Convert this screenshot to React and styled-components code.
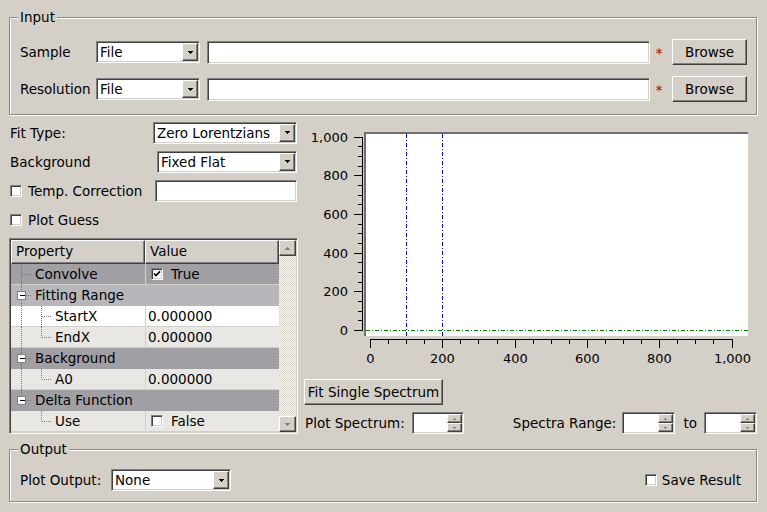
import React from "react"
import styled, { createGlobalStyle, css } from "styled-components"

const GlobalStyle = createGlobalStyle`
  html, body {
    margin: 0;
    padding: 0;
    background: #d4d0c8;
  }
  body {
    font-family: "DejaVu Sans", "Liberation Sans", sans-serif;
    font-size: 13.5px;
    color: #000;
  }
`

// classic 3d frames
const sunken = css`
  box-sizing: border-box;
  border: 1px solid;
  border-color: #808080 #ffffff #ffffff #808080;
  box-shadow: inset 1px 1px 0 #404040, inset -1px -1px 0 #d4d0c8;
`

const raised = css`
  box-sizing: border-box;
  border: 1px solid;
  border-color: #ffffff #404040 #404040 #ffffff;
  box-shadow: inset -1px -1px 0 #808080;
  background: #d4d0c8;
`

const Tri = ({ n = 3, up = false, color = "#000" }) => {
  const w = n * 2 - 1
  const rows = []
  for (let i = 0; i < n; i++) {
    const y = up ? n - 1 - i : i
    rows.push(<rect key={i} x={i} y={y} width={w - i * 2} height={1} fill={color} />)
  }
  return (
    <svg width={w} height={n} viewBox={`0 0 ${w} ${n}`} shapeRendering="crispEdges">
      {rows}
    </svg>
  )
}

const Window = styled.div`
  width: 767px;
  height: 512px;
  box-sizing: border-box;
  padding: 10px 10px 0 9px;
  display: flex;
  flex-direction: column;
`

const Group = styled.fieldset`
  margin: ${(p) => p.$mt || 0}px 0 0 0;
  padding: ${(p) => p.$pad};
  border: 1px solid #8c8980;
  box-shadow: inset 1px 1px 0 #ffffff, 1px 1px 0 #ffffff;
  min-width: 0;
`

const Legend = styled.legend`
  padding: 0 2px;
  margin-left: -2px;
  line-height: 15px;
  background: #d4d0c8;
`

const FileRow = styled.div`
  display: flex;
  align-items: center;
  height: 26px;
  & + & {
    margin-top: 11px;
  }
`

const RowLabel = styled.span`
  width: ${(p) => p.$w || 76}px;
  flex: none;
  white-space: nowrap;
`

const ComboFrame = styled.div`
  ${sunken};
  flex: none;
  width: ${(p) => p.$w}px;
  height: 22px;
  margin-left: ${(p) => p.$ml || 0}px;
  padding: 1px;
  background: #fff;
  display: flex;
  align-items: stretch;
`

const ComboText = styled.span`
  flex: 1;
  padding-left: 2px;
  line-height: 18px;
  white-space: nowrap;
  overflow: hidden;
`

const DropButton = styled.span`
  ${raised};
  width: 16px;
  display: flex;
  align-items: center;
  justify-content: center;
`

const ComboBox = ({ width, text, ml }) => (
  <ComboFrame $w={width} $ml={ml}>
    <ComboText>{text}</ComboText>
    <DropButton>
      <Tri n={3} />
    </DropButton>
  </ComboFrame>
)

const LineEdit = styled.input`
  ${sunken};
  display: block;
  height: ${(p) => p.$h || 23}px;
  width: ${(p) => (p.$w ? `${p.$w}px` : "auto")};
  flex: ${(p) => (p.$w ? "none" : "1")};
  min-width: 0;
  margin: 0 0 0 ${(p) => p.$ml || 0}px;
  padding: 0 3px;
  background: #fff;
  font: inherit;
  outline: none;
`

const Required = styled.span`
  width: 22px;
  flex: none;
  padding-right: 4px;
  box-sizing: border-box;
  text-align: center;
  color: #b40000;
  align-self: flex-start;
  margin-top: 6px;
`

const PushButton = styled.button`
  ${raised};
  flex: none;
  width: ${(p) => p.$w}px;
  height: 26px;
  padding: 0;
  font: inherit;
  color: #000;
`

const Middle = styled.div`
  display: flex;
  margin-top: 7px;
  height: 312px;
`

const LeftPane = styled.div`
  width: 289px;
  flex: none;
  display: flex;
  flex-direction: column;
`

const FormRow = styled.div`
  display: flex;
  align-items: center;
  justify-content: space-between;
  height: ${(p) => p.$h || 21}px;
  margin-top: ${(p) => p.$mt || 0}px;
  padding: 0 ${(p) => (p.$flush ? 0 : 1)}px;
`

const CheckGroup = styled.label`
  display: flex;
  align-items: center;
  gap: ${(p) => p.$gap || 6}px;
  white-space: nowrap;
`

const CheckFrame = styled.span`
  ${sunken};
  width: 12px;
  height: 12px;
  flex: none;
  background: #fff;
  display: flex;
  align-items: center;
  justify-content: center;
`

const CheckBox = ({ checked }) => (
  <CheckFrame>
    {checked && (
      <svg width="8" height="8" viewBox="0 0 8 8">
        <path d="M1 3.5l2 2 4-4.2" fill="none" stroke="#000" strokeWidth="1.7" />
      </svg>
    )}
  </CheckFrame>
)

const Tree = styled.div`
  ${sunken};
  margin-top: 9px;
  height: 196px;
  padding: 1px;
  display: flex;
  background: #fff;
`

const TreeBody = styled.div`
  flex: 1;
  display: flex;
  flex-direction: column;
  background: #fff;
  overflow: hidden;
`

const HeaderRow = styled.div`
  display: flex;
  height: 24px;
  flex: none;
`

const HeaderCell = styled.div`
  ${raised};
  width: ${(p) => (p.$w ? `${p.$w}px` : "auto")};
  flex: ${(p) => (p.$w ? "none" : "1")};
  padding-left: 4px;
  line-height: 21px;
`

const PropRow = styled.div`
  display: flex;
  height: 21px;
  flex: none;
  box-sizing: border-box;
  background: ${(p) => p.$bg};
  border-bottom: 1px solid ${(p) => (p.$group ? "transparent" : "#d4d0c8")};
`

const NameCell = styled.div`
  width: ${(p) => (p.$full ? "auto" : "134px")};
  flex: ${(p) => (p.$full ? "1" : "none")};
  display: flex;
  align-items: flex-start;
  white-space: nowrap;
`

const NameText = styled.span`
  padding-left: 2px;
  line-height: 20px;
`

const ValueCell = styled.div`
  flex: 1;
  border-left: 1px solid #d4d0c8;
  padding-left: 2px;
  display: flex;
  align-items: center;
  gap: 8px;
  line-height: 20px;
`

const ValueCheck = styled.span`
  margin-left: 3px;
  display: flex;
`

const DOT = "#777"

const Guide = ({ width, line, branch, box, axis }) => (
  <svg width={width} height="21" viewBox={`0 0 ${width} 21`} style={{ flex: "none" }}>
    {line !== "none" && (
      <line
        x1={axis}
        x2={axis}
        y1="0"
        y2={line === "half" ? 10.5 : 21}
        stroke={DOT}
        strokeDasharray="1 1"
      />
    )}
    {branch && (
      <line x1={axis + 0.5} x2={width - 2} y1="10.5" y2="10.5" stroke={DOT} strokeDasharray="1 1" />
    )}
    {box && (
      <g shapeRendering="crispEdges">
        <rect x={axis - 4} y="6.5" width="8" height="8" fill="#fff" stroke="#808080" />
        <line x1={axis - 2} x2={axis + 3} y1="10.5" y2="10.5" stroke="#000" />
      </g>
    )}
  </svg>
)

const ScrollBar = styled.div`
  width: 17px;
  flex: none;
  display: flex;
  flex-direction: column;
  justify-content: space-between;
  background: repeating-conic-gradient(#d4d0c8 0 25%, #ffffff 0 50%) 0 0 / 2px 2px;
`

const ScrollButton = styled.div`
  ${raised};
  height: 16px;
  display: flex;
  align-items: center;
  justify-content: center;
`

const rows = [
  { name: "Convolve", bg: "#a09fa4", l1: "full", branch: true, check: true, value: "True" },
  { name: "Fitting Range", bg: "#b7b6bb", l1: "full", box: true, group: true },
  { name: "StartX", bg: "#ffffff", l1: "full", l2: "full", value: "0.000000" },
  { name: "EndX", bg: "#e9e7e3", l1: "full", l2: "half", value: "0.000000" },
  { name: "Background", bg: "#a09fa4", l1: "full", box: true, group: true },
  { name: "A0", bg: "#e9e7e3", l1: "full", l2: "half", value: "0.000000" },
  { name: "Delta Function", bg: "#a09fa4", l1: "half", box: true, group: true },
  { name: "Use", bg: "#e9e7e3", l1: "none", l2: "half", check: false, value: "False" },
]

const PropertyTree = () => (
  <Tree>
    <TreeBody>
      <HeaderRow>
        <HeaderCell $w={134}>Property</HeaderCell>
        <HeaderCell>Value</HeaderCell>
      </HeaderRow>
      {rows.map((r) => (
        <PropRow key={r.name} $bg={r.bg} $group={r.group}>
          <NameCell $full={r.group}>
            <Guide width={22} axis={10.5} line={r.l1} branch={!r.l2} box={r.box} />
            {r.l2 && <Guide width={20} axis={8.5} line={r.l2} branch />}
            <NameText>{r.name}</NameText>
          </NameCell>
          {!r.group && (
            <ValueCell>
              {r.check !== undefined && (
                <ValueCheck>
                  <CheckBox checked={r.check} />
                </ValueCheck>
              )}
              {r.value}
            </ValueCell>
          )}
        </PropRow>
      ))}
    </TreeBody>
    <ScrollBar>
      <ScrollButton>
        <Tri n={3} up color="#808080" />
      </ScrollButton>
      <ScrollButton>
        <Tri n={3} color="#808080" />
      </ScrollButton>
    </ScrollBar>
  </Tree>
)

const RightPane = styled.div`
  flex: 1;
  margin-left: 6px;
  display: flex;
  flex-direction: column;
  align-items: flex-start;
`

const ChartSvg = styled.svg`
  display: block;
  flex: none;
  text {
    font-family: "DejaVu Sans", "Liberation Sans", sans-serif;
    font-size: 13px;
    fill: #000;
  }
`

const xPix = (v) => Math.round(66 + v * 0.3615) + 0.5
const yPix = (v) => Math.round(208 - v * 0.1935) + 0.5
const fmt = (v) => (v >= 1000 ? "1,000" : String(v))

const PlotChart = () => {
  const steps = []
  for (let v = 0; v <= 1000; v += 50) steps.push(v)
  return (
    <ChartSvg width="453" height="250" viewBox="0 0 453 250">
      <rect x="60" y="10" width="384" height="204" fill="#fff" />
      <rect x="60" y="10" width="384" height="2" fill="#6f6f6f" />
      <rect x="60" y="10" width="2" height="204" fill="#6f6f6f" />
      <g strokeDasharray="4 2 1 2">
        <line x1={xPix(100)} x2={xPix(100)} y1="12" y2="214" stroke="#0000ff" />
        <line x1={xPix(200)} x2={xPix(200)} y1="12" y2="214" stroke="#0000ff" />
        <line x1="62" x2="444" y1={yPix(0)} y2={yPix(0)} stroke="#008000" />
      </g>
      <g stroke="#000" shapeRendering="crispEdges">
        <line x1="58.5" x2="58.5" y1={yPix(1000) - 0.5} y2={yPix(0) + 0.5} />
        {steps.map((v) => (
          <line key={`y${v}`} x1={v % 200 === 0 ? 50 : 54} x2="58.5" y1={yPix(v)} y2={yPix(v)} />
        ))}
        <line x1={xPix(0) - 0.5} x2={xPix(1000) + 0.5} y1="217.5" y2="217.5" />
        {steps.map((v) => (
          <line key={`x${v}`} x1={xPix(v)} x2={xPix(v)} y1="217.5" y2={v % 200 === 0 ? 226 : 222} />
        ))}
      </g>
      {steps
        .filter((v) => v % 200 === 0)
        .map((v) => (
          <text key={`yl${v}`} x="44" y={yPix(v) + 4.5} textAnchor="end">
            {fmt(v)}
          </text>
        ))}
      {steps
        .filter((v) => v % 200 === 0)
        .map((v) => (
          <text key={`xl${v}`} x={xPix(v)} y="240.5" textAnchor="middle">
            {fmt(v)}
          </text>
        ))}
    </ChartSvg>
  )
}

const FitButton = styled(PushButton)`
  margin-top: 7px;
`

const SpinRow = styled.div`
  display: flex;
  align-items: center;
  align-self: stretch;
  height: 22px;
  margin-top: 7px;
  padding-left: 1px;
`

const SpinFrame = styled.div`
  ${sunken};
  flex: none;
  width: ${(p) => p.$w}px;
  height: 22px;
  margin-left: ${(p) => p.$ml || 0}px;
  padding: 1px;
  background: #fff;
  display: flex;
  justify-content: flex-end;
`

const SpinButtons = styled.div`
  width: 15px;
  display: flex;
  flex-direction: column;
`

const SpinButton = styled.span`
  ${raised};
  flex: 1;
  display: flex;
  align-items: center;
  justify-content: center;
`

const SpinBox = ({ width, ml }) => (
  <SpinFrame $w={width} $ml={ml}>
    <SpinButtons>
      <SpinButton>
        <Tri n={2} up color="#808080" />
      </SpinButton>
      <SpinButton>
        <Tri n={2} color="#808080" />
      </SpinButton>
    </SpinButtons>
  </SpinFrame>
)

const Spacer = styled.div`
  flex: 1;
`

const TextLabel = styled.span`
  white-space: nowrap;
  flex: none;
  width: ${(p) => (p.$w ? `${p.$w}px` : "auto")};
  margin-left: ${(p) => p.$ml || 0}px;
`

export default function App() {
  return (
    <>
      <GlobalStyle />
      <Window>
        <Group $pad="14px 9px 12px 10px">
          <Legend>Input</Legend>
          <FileRow>
            <RowLabel>Sample</RowLabel>
            <ComboBox width={104} text="File" />
            <LineEdit $ml={7} />
            <Required>*</Required>
            <PushButton $w={75}>Browse</PushButton>
          </FileRow>
          <FileRow>
            <RowLabel>Resolution</RowLabel>
            <ComboBox width={104} text="File" />
            <LineEdit $ml={7} />
            <Required>*</Required>
            <PushButton $w={75}>Browse</PushButton>
          </FileRow>
        </Group>

        <Middle>
          <LeftPane>
            <FormRow>
              <span>Fit Type:</span>
              <ComboBox width={144} text="Zero Lorentzians" />
            </FormRow>
            <FormRow $mt={8}>
              <span>Background</span>
              <ComboBox width={140} text="Fixed Flat" />
            </FormRow>
            <FormRow $mt={8} $h={22}>
              <CheckGroup>
                <CheckBox />
                Temp. Correction
              </CheckGroup>
              <LineEdit $w={142} $h={22} />
            </FormRow>
            <FormRow $mt={8} $h={20}>
              <CheckGroup>
                <CheckBox />
                Plot Guess
              </CheckGroup>
            </FormRow>
            <PropertyTree />
          </LeftPane>

          <RightPane>
            <PlotChart />
            <FitButton $w={139}>Fit Single Spectrum</FitButton>
            <SpinRow>
              <TextLabel>Plot Spectrum:</TextLabel>
              <SpinBox width={52} ml={7} />
              <Spacer />
              <TextLabel>Spectra Range:</TextLabel>
              <SpinBox width={53} ml={6} />
              <TextLabel $ml={8}>to</TextLabel>
              <SpinBox width={53} ml={7} />
            </SpinRow>
          </RightPane>
        </Middle>

        <Group $mt={8} $pad="12px 15px 10px 10px">
          <Legend>Output</Legend>
          <FormRow $h={22} $flush>
            <TextLabel $w={91}>Plot Output:</TextLabel>
            <ComboBox width={120} text="None" />
            <Spacer />
            <CheckGroup $gap={5}>
              <CheckBox />
              Save Result
            </CheckGroup>
          </FormRow>
        </Group>
      </Window>
    </>
  )
}
